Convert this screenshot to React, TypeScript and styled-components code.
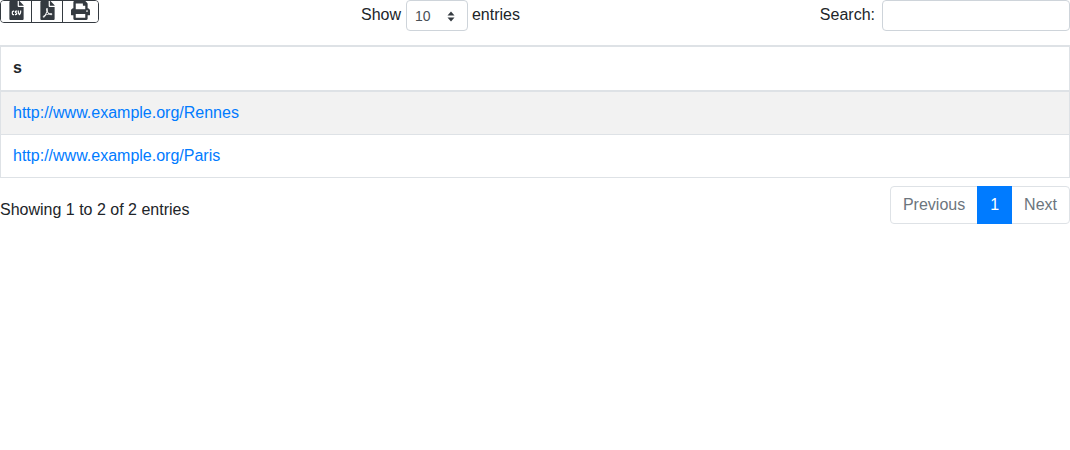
import React from "react";
import styled, { createGlobalStyle } from "styled-components";
import { FaFileCsv, FaFilePdf, FaPrint } from "react-icons/fa";

const GlobalStyle = createGlobalStyle`
  body {
    margin: 0;
    background: #fff;
    color: #212529;
    font-family: "Liberation Sans", Arial, sans-serif;
    font-size: 16px;
    line-height: 1.5;
  }
`;

const Wrapper = styled.div`
  width: 1070px;
`;

const Toolbar = styled.div`
  display: grid;
  grid-template-columns: 361px auto 1fr;
  height: 45px;
`;

const ButtonGroup = styled.div`
  display: inline-flex;
  align-self: start;
  justify-self: start;
  height: 23px;
  border: 1px solid #343a40;
  border-radius: 4px;
  box-sizing: border-box;
  overflow: hidden;
`;

const ExportButton = styled.button<{ $wide?: boolean }>`
  display: flex;
  align-items: flex-start;
  justify-content: center;
  width: ${(p) => (p.$wide ? "36px" : "31px")};
  padding: 0;
  border: 0;
  border-left: 1px solid #343a40;
  background: #fff;
  color: #343a40;
  font-size: 19px;

  &:first-child {
    width: 30px;
    border-left: 0;
  }
`;

const LengthControl = styled.label`
  display: flex;
  align-items: flex-start;
  gap: 4.45px;
  line-height: 30px;
`;

const FakeSelect = styled.div`
  display: flex;
  align-items: center;
  justify-content: space-between;
  box-sizing: border-box;
  width: 62px;
  height: 31px;
  margin: 0 -0.6px 0 0.6px;
  padding: 0 12px 0 8px;
  border: 1px solid #ced4da;
  border-radius: 4px;
  color: #495057;
  font-size: 14px;
`;

const SearchControl = styled.label`
  display: flex;
  align-items: flex-start;
  justify-content: flex-end;
  gap: 7px;
  line-height: 30px;
`;

const SearchInput = styled.input`
  box-sizing: border-box;
  width: 188px;
  height: 31px;
  border: 1px solid #ced4da;
  border-radius: 4px;
  background: #fff;
`;

const Table = styled.table`
  width: 100%;
  border-collapse: collapse;
  border: 1px solid #dee2e6;
`;

const HeadCell = styled.th`
  padding: 9px 12px 10px;
  border: 1px solid #dee2e6;
  border-top-width: 2px;
  border-bottom-width: 2px;
  text-align: left;
  font-weight: 700;
`;

const Row = styled.tr<{ $striped?: boolean }>`
  background: ${(p) => (p.$striped ? "#f2f2f2" : "#fff")};
`;

const Cell = styled.td`
  padding: 9px 12px;
  border: 1px solid #dee2e6;
`;

const CellLink = styled.a`
  color: #007bff;
  text-decoration: none;
`;

const Footer = styled.div`
  display: flex;
  align-items: flex-start;
  justify-content: space-between;
  margin-top: 8px;
`;

const Info = styled.div`
  padding-top: 12px;
`;

const Pagination = styled.ul`
  display: flex;
  margin: 0;
  padding: 0;
  list-style: none;
`;

const PageItem = styled.li<{ $active?: boolean }>`
  margin-left: -1px;
  padding: 6px 12px;
  border: 1px solid ${(p) => (p.$active ? "#007bff" : "#dee2e6")};
  background: ${(p) => (p.$active ? "#007bff" : "#fff")};
  color: ${(p) => (p.$active ? "#fff" : "#6c757d")};
  position: relative;
  z-index: ${(p) => (p.$active ? 1 : 0)};

  &:first-child {
    margin-left: 0;
    border-radius: 4px 0 0 4px;
  }

  &:last-child {
    border-radius: 0 4px 4px 0;
  }
`;

const Arrows = styled.svg`
  margin-top: 2px;
`;

const SortArrows = () => (
  <Arrows width="8" height="11" viewBox="0 0 8 11">
    <path d="M4 0.5 L7.5 4.5 H0.5 Z M4 10.5 L0.5 6.5 H7.5 Z" fill="#343a40" />
  </Arrows>
);

const App: React.FC = () => {
  return (
    <Wrapper>
      <GlobalStyle />
      <Toolbar>
        <ButtonGroup>
          <ExportButton>
            <FaFileCsv />
          </ExportButton>
          <ExportButton>
            <FaFilePdf />
          </ExportButton>
          <ExportButton $wide>
            <FaPrint />
          </ExportButton>
        </ButtonGroup>
        <LengthControl>
          Show
          <FakeSelect>
            10
            <SortArrows />
          </FakeSelect>
          entries
        </LengthControl>
        <SearchControl>
          Search:
          <SearchInput type="search" />
        </SearchControl>
      </Toolbar>
      <Table>
        <thead>
          <tr>
            <HeadCell>s</HeadCell>
          </tr>
        </thead>
        <tbody>
          <Row $striped>
            <Cell>
              <CellLink href="#">http://www.example.org/Rennes</CellLink>
            </Cell>
          </Row>
          <Row>
            <Cell>
              <CellLink href="#">http://www.example.org/Paris</CellLink>
            </Cell>
          </Row>
        </tbody>
      </Table>
      <Footer>
        <Info>Showing 1 to 2 of 2 entries</Info>
        <Pagination>
          <PageItem>Previous</PageItem>
          <PageItem $active>1</PageItem>
          <PageItem>Next</PageItem>
        </Pagination>
      </Footer>
    </Wrapper>
  );
};

export default App;
